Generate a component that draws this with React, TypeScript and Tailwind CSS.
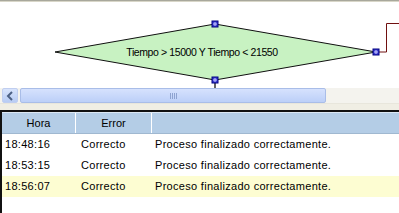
import React from "react";

const Handle = ({ x, y }: { x: number; y: number }) => (
  <g>
    <rect x={x - 3} y={y - 3} width={6} height={6} fill="#3a3ad0" stroke="#000080" strokeWidth={1} />
    <line x1={x} y1={y - 2} x2={x} y2={y + 2} stroke="#c8c8ff" strokeWidth={1} />
    <line x1={x - 2} y1={y} x2={x + 2} y2={y} stroke="#c8c8ff" strokeWidth={1} />
  </g>
);

const rows = [
  { h: "18:48:16", e: "Correcto", m: "Proceso finalizado correctamente.", hl: false },
  { h: "18:53:15", e: "Correcto", m: "Proceso finalizado correctamente.", hl: false },
  { h: "18:56:07", e: "Correcto", m: "Proceso finalizado correctamente.", hl: true },
];

export default function App() {
  return (
    <div
      className="w-[399px] h-[213px] overflow-hidden bg-white flex flex-col text-[11px] text-black"
      style={{ fontFamily: '"Liberation Sans", Arial, sans-serif' }}
    >
      <div className="h-[1px] bg-[#a8a89c]" />
      <div className="h-[1px] bg-[#d8d6c8]" />
      <div className="h-[86px] bg-white relative">
        <svg width="399" height="86" className="absolute left-0 top-0">
          <g transform="translate(0,-2)">
            <polygon points="55,52 215,24 376,52 215,80" fill="#c8f2c2" stroke="#101010" strokeWidth={1} />
            <line x1={215} y1={80} x2={215} y2={88} stroke="#303030" strokeWidth={1.5} />
            <polyline points="376,52 386.5,52 386.5,23.5 399,23.5" fill="none" stroke="#701010" strokeWidth={1} />
            <Handle x={215} y={24} />
            <Handle x={215} y={80} />
            <Handle x={376} y={52} />
          </g>
        </svg>
        <div className="absolute left-0 right-0 top-[43px] flex justify-center pl-[5px] text-[10.5px] tracking-[-0.4px]">
          <span>Tiempo &gt; 15000 Y Tiempo &lt; 21550</span>
        </div>
      </div>
      <div className="h-[16px] bg-[#f4f3ee] flex items-stretch px-[2px] gap-[2px] border-b border-[#e8e6dc]">
        <div className="w-[16px] rounded-[2px] bg-gradient-to-b from-[#d8e4fc] to-[#b8ccf4] border border-[#c0cef0] flex items-center justify-center">
          <svg width="8" height="10" viewBox="0 0 8 10">
            <polyline points="6,1 2,5 6,9" fill="none" stroke="#4d6185" strokeWidth={2} />
          </svg>
        </div>
        <div className="w-[306px] rounded-[2px] bg-gradient-to-b from-[#d6e2fd] to-[#bccff8] border border-[#a9bde8] flex items-center justify-center">
          <div className="flex gap-[1px]">
            <div className="w-[1px] h-[6px] bg-[#8ea3d0]" />
            <div className="w-[1px] h-[6px] bg-[#8ea3d0]" />
            <div className="w-[1px] h-[6px] bg-[#8ea3d0]" />
            <div className="w-[1px] h-[6px] bg-[#8ea3d0]" />
          </div>
        </div>
      </div>
      <div className="h-[6px] bg-[#f0eee4]" />
      <div className="h-[2px] bg-[#111]" />
      <div className="flex-1 flex">
        <div className="w-[2px] bg-[#111]" />
        <div className="flex-1 flex flex-col">
          <div className="h-[22px] bg-[#b4cde6] flex border-b border-[#a0b8d0] border-t border-t-[#dce8f4]">
            <div className="w-[74px] flex items-center justify-center border-r border-white">Hora</div>
            <div className="w-[76px] flex items-center justify-center border-r border-white">Error</div>
            <div className="flex-1" />
          </div>
          {rows.map((r, i) => (
            <div
              key={i}
              className={`h-[21px] flex items-center tracking-[0.3px] ${r.hl ? "bg-[#fdfdd2]" : "bg-white"}`}
            >
              <div className="w-[77px] pl-[3px]">{r.h}</div>
              <div className="w-[76px] pl-[2px]">{r.e}</div>
              <div className="flex-1">{r.m}</div>
            </div>
          ))}
        </div>
      </div>
    </div>
  );
}
